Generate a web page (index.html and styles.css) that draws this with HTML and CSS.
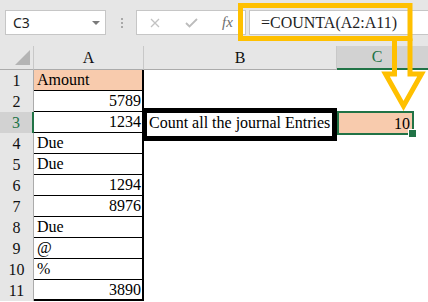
FILE: index.html
```html
<!DOCTYPE html>
<html>
<head>
<meta charset="utf-8">
<link rel="stylesheet" href="styles.css">
</head>
<body>
<div class="app">
  <div class="toolbar">
    <div class="namebox"><span class="ref">C3</span><span class="caret"></span></div>
    <div class="dots"><i></i><i></i><i></i></div>
    <div class="fxtools">
      <svg class="ico-x" width="10" height="10" viewBox="0 0 10 10"><path d="M1 1 L9 9 M9 1 L1 9" stroke="#c2c2c2" stroke-width="1.3" fill="none"/></svg>
      <svg class="ico-ok" width="13" height="10" viewBox="0 0 13 10"><path d="M1 5 L4.5 8.5 L12 1" stroke="#bcbcbc" stroke-width="1.8" fill="none"/></svg>
      <span class="fx">fx</span>
    </div>
    <div class="formula">=COUNTA(A2:A11)</div>
  </div>
  <div class="sheet">
    <div class="corner"><span class="tri"></span></div>
    <div class="ch">A</div>
    <div class="ch">B</div>
    <div class="ch ch-sel">C</div>

    <div class="rh">1</div><div class="a a-head">Amount</div><div class="c"></div><div class="c"></div><div class="c"></div>
    <div class="rh">2</div><div class="a num">5789</div><div class="c"></div><div class="c"></div><div class="c"></div>
    <div class="rh rh-sel">3</div><div class="a num">1234</div><div class="c b-box">Count all the journal Entries</div><div class="c c-sel">10</div><div class="c"></div>
    <div class="rh">4</div><div class="a">Due</div><div class="c"></div><div class="c"></div><div class="c"></div>
    <div class="rh">5</div><div class="a">Due</div><div class="c"></div><div class="c"></div><div class="c"></div>
    <div class="rh">6</div><div class="a num">1294</div><div class="c"></div><div class="c"></div><div class="c"></div>
    <div class="rh">7</div><div class="a num">8976</div><div class="c"></div><div class="c"></div><div class="c"></div>
    <div class="rh">8</div><div class="a">Due</div><div class="c"></div><div class="c"></div><div class="c"></div>
    <div class="rh">9</div><div class="a">@</div><div class="c"></div><div class="c"></div><div class="c"></div>
    <div class="rh">10</div><div class="a">%</div><div class="c"></div><div class="c"></div><div class="c"></div>
    <div class="rh">11</div><div class="a num a-last">3890</div><div class="c"></div><div class="c"></div><div class="c"></div>
  </div>
  <svg class="annot" width="428" height="302" viewBox="0 0 428 302">
    <rect x="240.5" y="5.5" width="169.5" height="33" fill="none" stroke="#ffc000" stroke-width="5"/>
    <path d="M394.5 38.5 L394.5 74 L385.5 74 L403.5 106 L421.5 74 L410 74 L410 38.5" fill="none" stroke="#ffc000" stroke-width="5" stroke-linejoin="miter"/>
  </svg>
</div>
</body>
</html>
```
FILE: styles.css
```css
* { box-sizing: border-box; }
html, body { margin: 0; padding: 0; background: #fff; }
body { font-family: "Liberation Serif", "Times New Roman", serif; font-size: 16px; color: #000; }
.app { position: relative; width: 428px; height: 302px; overflow: hidden; }

.toolbar { height: 46px; background: #e6e6e6; display: flex; align-items: flex-start; padding-top: 10px; }
.namebox { margin-left: 5px; width: 101px; height: 25px; background: #fff; border: 1px solid #c6c6c6; display: flex; align-items: center; justify-content: space-between; padding: 0 5px 0 7px; font-family: "Noto Sans", "Open Sans", sans-serif; font-size: 14px; color: #222; }
.ref { line-height: 22px; }
.caret { width: 0; height: 0; border-left: 4px solid transparent; border-right: 4px solid transparent; border-top: 4px solid #7a7a7a; margin-top: 1px; }
.dots { margin-left: 15px; width: 2px; display: flex; flex-direction: column; gap: 2px; padding-top: 8px; }
.dots i { display: block; width: 2px; height: 2px; background: #a8a8a8; }
.fxtools { margin-left: 13px; width: 110px; height: 25px; background: #fff; border: 1px solid #c6c6c6; display: flex; align-items: center; }
.ico-x { margin-left: 13px; }
.ico-ok { margin-left: 25px; }
.fx { margin-left: 24px; font-style: italic; font-size: 15px; color: #6e6e6e; font-family: "Liberation Serif", serif; }
.formula { margin-left: 3px; flex: 1; height: 25px; background: #fff; border: 1px solid #c6c6c6; border-right: none; padding: 0 0 0 11px; line-height: 23px; color: #1f1f1f; }

.sheet { display: grid; grid-template-columns: 34px 110px 193px 80px 1fr; grid-template-rows: 24px; grid-auto-rows: 21px; }
.corner { background: #e6e6e6; border-right: 1px solid #c8c8c8; border-bottom: 1px solid #ababab; position: relative; }
.tri { position: absolute; right: 3px; bottom: 4px; width: 0; height: 0; border-left: 15px solid transparent; border-bottom: 15px solid #b4b4b4; }
.ch { background: #e6e6e6; border-right: 1px solid #c8c8c8; border-bottom: 1px solid #ababab; text-align: center; line-height: 23px; color: #111; }
.ch-sel { grid-column: 4 / 6; background: #d2d2d2; color: #217346; border-right: none; border-bottom: 2px solid #217346; padding-right: 11px; line-height: 22px; }

.rh { background: #e6e6e6; border-right: 1px solid #ababab; text-align: center; line-height: 21px; color: #111; }
.rh-sel { background: #d2d2d2; color: #217346; border-right: 2px solid #217346; }
.a { border-bottom: 1px solid #000; border-right: 2px solid #000; padding: 0 1px 0 3px; line-height: 20px; white-space: nowrap; }
.a-head { background: #f8cbad; }
.num { text-align: right; }
.a-last { border-bottom-width: 2px; }
.c { line-height: 21px; white-space: nowrap; }
.b-box { position: relative; padding-left: 5px; }
.b-box::before { content: ""; position: absolute; top: -4px; left: -2px; right: 0; bottom: -8px; border: 5px solid #000; }
.c-sel { position: relative; z-index: 1; background: #f8cbad; border: 2px solid #217346; margin: -1px 3px -2px 0; text-align: right; padding-right: 2px; line-height: 21px; }
.c-sel::after { content: ""; position: absolute; right: -5px; bottom: -5px; width: 7px; height: 7px; background: #217346; border: 1px solid #fff; }

.annot { position: absolute; left: 0; top: 0; pointer-events: none; }
```
